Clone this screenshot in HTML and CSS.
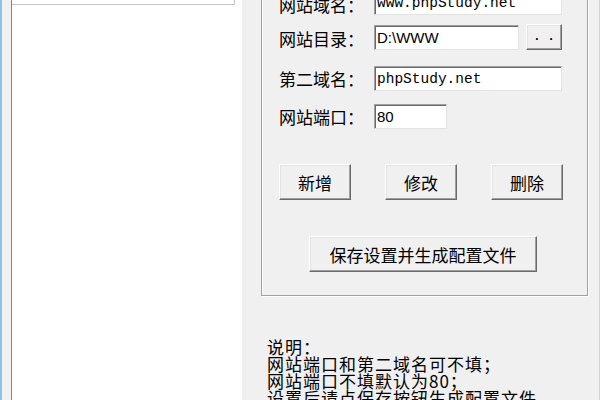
FILE: index.html
```html
<!DOCTYPE html>
<html lang="zh-CN">
<head>
    <meta charset="UTF-8">
    <title>站点管理</title>
    <link rel="stylesheet" href="styles.css">
</head>
<body>
    <div class="window">
        <div class="list-col">
            <div class="listbox">
                <div class="item">localhost</div>
            </div>
        </div>

        <div class="side">
            <div class="group">
                <div class="row row1">
                    <span class="label">网站域名：</span>
                    <input class="field wide mono" value="www.phpStudy.net">
                </div>
                <div class="row row2">
                    <span class="label">网站目录：</span>
                    <input class="field mid sans" value="D:\WWW">
                    <button class="btn browse">. .</button>
                </div>
                <div class="row row3">
                    <span class="label">第二域名：</span>
                    <input class="field wide mono" value="phpStudy.net">
                </div>
                <div class="row row4">
                    <span class="label">网站端口：</span>
                    <input class="field short sans" value="80">
                </div>

                <div class="actions">
                    <button class="btn action">新增</button>
                    <button class="btn action">修改</button>
                    <button class="btn action">删除</button>
                </div>

                <div class="save-row">
                    <button class="btn save">保存设置并生成配置文件</button>
                </div>
            </div>

            <div class="notes">
                说明：<br>
                网站端口和第二域名可不填；<br>
                网站端口不填默认为80；<br>
                设置后请点保存按钮生成配置文件
            </div>
        </div>
    </div>
</body>
</html>
```

FILE: styles.css
```css
html, body {
    margin: 0;
    padding: 0;
}
body {
    font-family: "Noto Sans CJK SC", "Liberation Sans", sans-serif;
    color: #000;
    background: #f0f0f0;
}
.window {
    display: flex;
    width: 600px;
    height: 400px;
    box-sizing: border-box;
    overflow: hidden;
    background: #f0f0f0;
    border-left: 2px solid #8cc0e8;
    border-right: 1px solid #d4d4d4;
}
.list-col {
    flex: none;
    padding-left: 9px;
}
.listbox {
    width: 230px;
    height: 100%;
    background: #fff;
    border-left: 1px solid #828790;
    overflow: hidden;
}
.item {
    width: 220px;
    height: 18px;
    margin-top: -15px;
    padding-left: 2px;
    border: 1px solid #c4c4c4;
    border-left: none;
    font: 12px "Liberation Sans", sans-serif;
    line-height: 14px;
}
.side {
    flex: none;
    margin-left: 19px;
    width: 328px;
}
.group {
    box-sizing: border-box;
    width: 327px;
    margin-top: -30px;
    padding: 19px 0 23px 17px;
    border: 1px solid #a0a0a0;
    box-shadow: 1px 1px 0 #fff, inset 1px 1px 0 #fff;
}
.row {
    display: flex;
    align-items: center;
}
.row2 { margin-top: 9px; }
.row3 { margin-top: 16px; }
.row4 { margin-top: 13px; }
.label {
    width: 95px;
    font-size: 17px;
    line-height: 20px;
}
.row1 .label, .row2 .label {
    padding-top: 4px;
}
.field {
    box-sizing: border-box;
    height: 25px;
    margin: 0;
    padding: 0 0 0 2px;
    background: #fff;
    border: 1px solid;
    border-color: #a0a0a0 #e3e3e3 #e3e3e3 #a0a0a0;
    box-shadow: inset 1px 1px 0 #696969;
    outline: none;
    color: #000;
}
.mono {
    font: 14.5px "Liberation Mono", monospace;
}
.sans {
    font: 15px "Liberation Sans", sans-serif;
}
.wide { width: 188px; }
.mid { width: 145px; }
.short { width: 73px; }
.btn {
    box-sizing: border-box;
    margin: 0;
    padding: 0;
    background: #f0f0f0;
    border: 1px solid;
    border-color: #fff #696969 #696969 #fff;
    box-shadow: inset -1px -1px 0 #a0a0a0, inset 1px 1px 0 #e3e3e3;
    font-family: "Noto Sans CJK SC", sans-serif;
    font-size: 17px;
    color: #000;
}
.browse {
    width: 36px;
    height: 26px;
    margin-left: 7px;
    font: bold 12px "Liberation Mono", monospace;
    line-height: 14px;
}
.actions {
    display: flex;
    gap: 34px;
    margin-top: 35px;
}
.action {
    width: 72px;
    height: 36px;
}
.save-row {
    margin-top: 36px;
    padding-left: 30px;
}
.save {
    width: 228px;
    height: 36px;
}
.notes {
    margin-top: 42px;
    padding-left: 6px;
    font-size: 17px;
    letter-spacing: 1px;
    line-height: 17px;
}
```
